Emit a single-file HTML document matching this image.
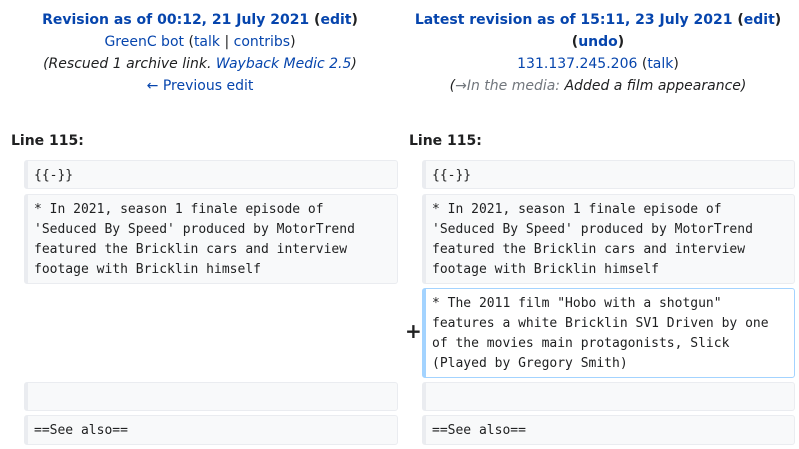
<!DOCTYPE html>
<html><head><meta charset="utf-8"><style>
body{margin:0;width:799px;height:449px;overflow:hidden;background:#fff;font-family:"DejaVu Sans","Liberation Sans",sans-serif;color:#202122;font-size:14px}
a{color:#0645ad;text-decoration:none}
.hdr{position:absolute;top:9px;width:380px;text-align:center;line-height:22px}
.hdr b a{color:#0645ad}
.ln{position:absolute;top:131px;font-weight:bold;font-size:14px;line-height:20px}
.box{position:absolute;box-sizing:border-box;background:#f8f9fa;border:1px solid #eaecf0;border-left:4px solid #eaecf0;border-radius:3px;font-family:"DejaVu Sans Mono","Liberation Mono",monospace;font-size:13px;line-height:20px;padding:5px 6px 3px;white-space:pre-wrap}
.add{background:#fff;border-color:#a3d3ff}
.plus{position:absolute;left:405px;top:319px;font-weight:bold;font-size:20px}
</style></head><body>
<div class="hdr" style="left:10px"><b><a>Revision as of 00:12, 21 July 2021</a> (<a>edit</a>)</b><br><a>GreenC bot</a> (<a>talk</a> | <a>contribs</a>)<br><i>(Rescued 1 archive link. <a>Wayback Medic 2.5</a>)</i><br><a>← Previous edit</a></div>
<div class="hdr" style="left:408px"><b><a>Latest revision as of 15:11, 23 July 2021</a> (<a>edit</a>)<br>(<a>undo</a>)</b><br><a>131.137.245.206</a> (<a>talk</a>)<br><i>(<span style="color:#72777d">→In the media:</span> Added a film appearance)</i></div>
<div class="ln" style="left:11px">Line 115:</div>
<div class="ln" style="left:409px">Line 115:</div>
<div class="box" style="left:24px;top:160px;width:374px;height:29px">{{-}}</div>
<div class="box" style="left:422px;top:160px;width:373px;height:29px">{{-}}</div>
<div class="box" style="left:24px;top:194px;width:374px;height:90px">* In 2021, season 1 finale episode of 'Seduced By Speed' produced by MotorTrend featured the Bricklin cars and interview footage with Bricklin himself</div>
<div class="box" style="left:422px;top:194px;width:373px;height:90px">* In 2021, season 1 finale episode of 'Seduced By Speed' produced by MotorTrend featured the Bricklin cars and interview footage with Bricklin himself</div>
<div class="plus">+</div>
<div class="box add" style="left:422px;top:288px;width:373px;height:90px">* The 2011 film "Hobo with a shotgun" features a white Bricklin SV1 Driven by one of the movies main protagonists, Slick (Played by Gregory Smith)</div>
<div class="box" style="left:24px;top:382px;width:374px;height:29px"></div>
<div class="box" style="left:422px;top:382px;width:373px;height:29px"></div>
<div class="box" style="left:24px;top:415px;width:374px;height:30px">==See also==</div>
<div class="box" style="left:422px;top:415px;width:373px;height:30px">==See also==</div>
</body></html>
